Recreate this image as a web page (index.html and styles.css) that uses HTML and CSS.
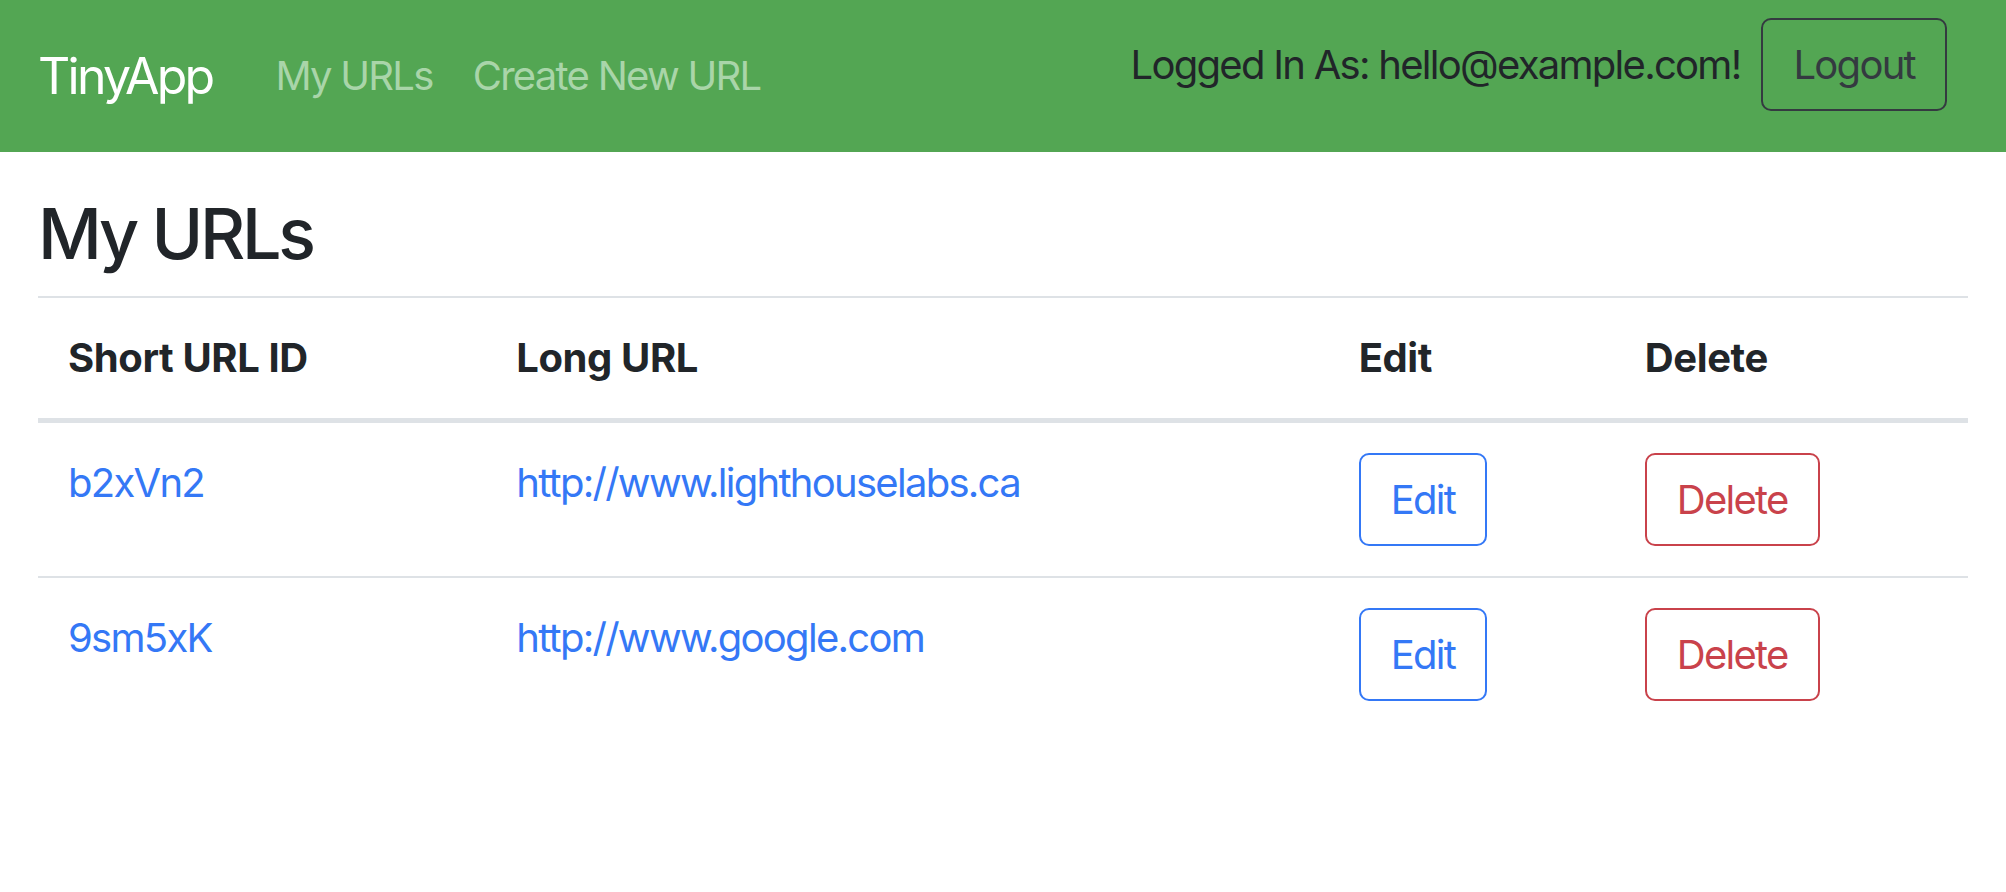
FILE: index.html
```html
<!DOCTYPE html>
<html lang="en">
<head>
<meta charset="utf-8">
<title>TinyApp</title>
<link rel="stylesheet" href="styles.css">
</head>
<body>
<nav class="navbar">
  <div class="nav-left">
    <a class="brand" href="#">TinyApp</a>
    <a class="nav-link" href="#">My URLs</a>
    <a class="nav-link" href="#">Create New URL</a>
  </div>
  <form class="nav-right">
    <span class="user">Logged In As: hello@example.com!</span>
    <button class="btn btn-dark" type="button">Logout</button>
  </form>
</nav>
<main class="container">
  <h3 class="title">My URLs</h3>
  <table class="table">
    <colgroup>
      <col class="c1"><col class="c2"><col class="c3"><col class="c4">
    </colgroup>
    <thead>
      <tr><th>Short URL ID</th><th>Long URL</th><th>Edit</th><th>Delete</th></tr>
    </thead>
    <tbody>
      <tr>
        <td><a href="#">b2xVn2</a></td>
        <td><a href="#">http://www.lighthouselabs.ca</a></td>
        <td><button class="btn btn-primary" type="button">Edit</button></td>
        <td><button class="btn btn-danger" type="button">Delete</button></td>
      </tr>
      <tr>
        <td><a href="#">9sm5xK</a></td>
        <td><a href="#">http://www.google.com</a></td>
        <td><button class="btn btn-primary" type="button">Edit</button></td>
        <td><button class="btn btn-danger" type="button">Delete</button></td>
      </tr>
    </tbody>
  </table>
</main>
</body>
</html>
```
FILE: styles.css
```css
* { box-sizing: border-box; }
html, body { margin: 0; padding: 0; }
body {
  font-family: Inter, "Liberation Sans", sans-serif;
  font-size: 40px;
  line-height: 1.5;
  letter-spacing: -0.043em;
  color: #212529;
  background: #fff;
}
a { text-decoration: none; color: #3478f6; }

.navbar {
  height: 152px;
  background: #53a653;
  display: flex;
  align-items: center;
  justify-content: space-between;
  padding: 0 59px 0 38px;
}
.nav-left {
  display: flex;
  align-items: center;
}
.brand {
  font-size: 50px;
  line-height: 75px;
  letter-spacing: -0.055em;
  color: #fff;
  margin-right: 43px;
}
.nav-link {
  padding: 0 20px;
  color: #a9d5a9;
  line-height: 60px;
}
.nav-right {
  display: flex;
  align-items: center;
  gap: 21px;
  margin: 0 0 23px 0;
}
.user { color: #212529; }

.btn {
  font-family: inherit;
  font-size: 40px;
  line-height: 60px;
  letter-spacing: -0.043em;
  padding: 14.5px 30px;
  border: 2px solid;
  border-radius: 10px;
  background: transparent;
  cursor: pointer;
}
.btn-dark { color: #343a40; border-color: #343a40; }
.btn-primary { color: #3478f6; border-color: #3478f6; }
.btn-danger { color: #c9424b; border-color: #c9424b; }

.container { padding: 0 38px; }
.title {
  font-size: 70px;
  font-weight: 500;
  line-height: 84px;
  letter-spacing: -0.047em;
  margin: 40px 0 20px;
}
.table {
  width: 100%;
  border-collapse: collapse;
  table-layout: fixed;
}
.c1 { width: 448px; }
.c2 { width: 842px; }
.c3 { width: 286px; }
.c4 { width: 353px; }
.table th, .table td {
  text-align: left;
  vertical-align: top;
  padding: 30px;
  border-top: 2px solid #dee2e6;
}
.table th { font-weight: 700; letter-spacing: -0.01em; }
.table thead th { border-bottom: 5px solid #dee2e6; }
.table tbody tr:first-child td { border-top: none; }
```
